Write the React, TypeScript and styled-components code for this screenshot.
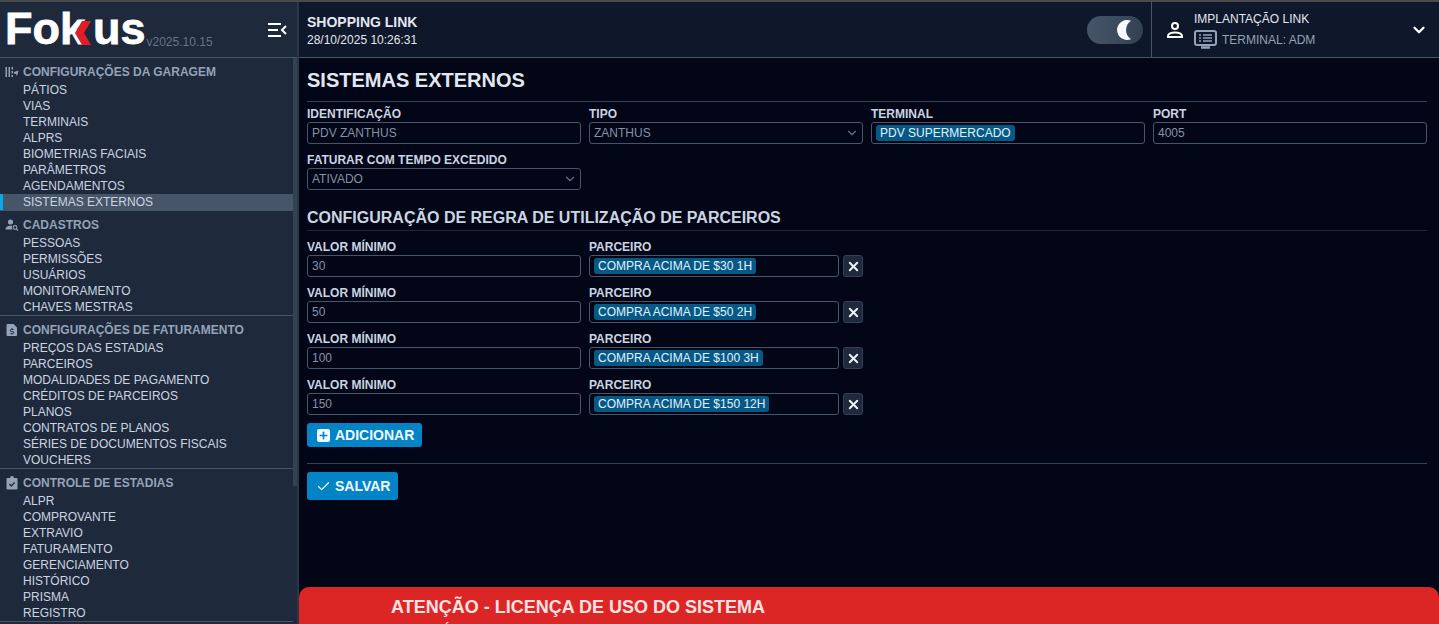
import React from 'react';
import styled, { createGlobalStyle } from 'styled-components';
import { Check, ChevronDown, Plus, X } from 'lucide-react';

const menu = [
  {
    title: 'CONFIGURAÇÕES DA GARAGEM',
    icon: 'garage',
    items: ['PÁTIOS', 'VIAS', 'TERMINAIS', 'ALPRS', 'BIOMETRIAS FACIAIS', 'PARÂMETROS', 'AGENDAMENTOS', 'SISTEMAS EXTERNOS'],
  },
  {
    title: 'CADASTROS',
    icon: 'people',
    items: ['PESSOAS', 'PERMISSÕES', 'USUÁRIOS', 'MONITORAMENTO', 'CHAVES MESTRAS'],
  },
  {
    title: 'CONFIGURAÇÕES DE FATURAMENTO',
    icon: 'invoice',
    items: ['PREÇOS DAS ESTADIAS', 'PARCEIROS', 'MODALIDADES DE PAGAMENTO', 'CRÉDITOS DE PARCEIROS', 'PLANOS', 'CONTRATOS DE PLANOS', 'SÉRIES DE DOCUMENTOS FISCAIS', 'VOUCHERS'],
  },
  {
    title: 'CONTROLE DE ESTADIAS',
    icon: 'clipboard',
    items: ['ALPR', 'COMPROVANTE', 'EXTRAVIO', 'FATURAMENTO', 'GERENCIAMENTO', 'HISTÓRICO', 'PRISMA', 'REGISTRO'],
  },
];

const rules = [
  { value: '30', partner: 'COMPRA ACIMA DE $30 1H' },
  { value: '50', partner: 'COMPRA ACIMA DE $50 2H' },
  { value: '100', partner: 'COMPRA ACIMA DE $100 3H' },
  { value: '150', partner: 'COMPRA ACIMA DE $150 12H' },
];

function MenuIcon({ name }: { name: string }) {
  if (name === 'garage') {
    return (
      <svg width="14" height="14" viewBox="0 0 14 14" fill="#94a3b8">
        <rect x="0.5" y="2" width="1.500" height="10" />
        <rect x="3.500" y="2" width="1.500" height="10" />
        <rect x="6.500" y="2" width="1.500" height="2.500" />
        <rect x="6.500" y="6" width="1.500" height="2.500" />
        <rect x="6.500" y="10" width="1.500" height="2" />
        <path d="M9 7l4.500-1.500-1.500 5.500-1-2-2-.5z" />
      </svg>
    );
  }
  if (name === 'people') {
    return (
      <svg width="14" height="14" viewBox="0 0 14 14" fill="#94a3b8">
        <circle cx="5.500" cy="4" r="2.600" />
        <path d="M0.500 11.500c0-2.600 2.400-3.800 5-3.800 .6 0 1.100 0 1.600.2-.4 1-.3 2.400.4 3.600z" />
        <circle cx="10" cy="9.500" r="1.900" fill="none" stroke="#94a3b8" strokeWidth="1.100" />
        <path d="M11.300 11l1.700 1.500" stroke="#94a3b8" strokeWidth="1.100" />
      </svg>
    );
  }
  if (name === 'invoice') {
    return (
      <svg width="14" height="14" viewBox="0 0 14 14" fill="#94a3b8">
        <path d="M2.500 1h6l3.500 3.500V12a1 1 0 0 1-1 1h-8.500a1 1 0 0 1-1-1V2a1 1 0 0 1 1-1z" />
        <path d="M7 5v1M7 10.500v1M8.500 6.500H6.300a.9.900 0 0 0 0 2h1.400a.9.900 0 0 1 0 2H5.500" stroke="#1e293b" strokeWidth="1" fill="none" />
      </svg>
    );
  }
  return (
    <svg width="14" height="14" viewBox="0 0 14 14" fill="#94a3b8">
      <path d="M2.500 2H5a2 2 0 0 1 4 0h2.500a1 1 0 0 1 1 1v9.500a1 1 0 0 1-1 1h-9a1 1 0 0 1-1-1V3a1 1 0 0 1 1-1z" />
      <path d="M4.300 8l2 2 3.400-3.500" stroke="#1e293b" strokeWidth="1.300" fill="none" />
    </svg>
  );
}

export default function App() {
  return (
    <>
      <GlobalStyle />
      <SPage>
        <SSidebarColumn>
          <SLogoBar>
            <SLogo>
              <SLogoText>Fo</SLogoText>
              <SLogoMark>
                <SLogoText>k</SLogoText>
                <SLogoChevron width="16" height="24" viewBox="0 0 16 24">
                  <path d="M7 0h9L9 12l7 12H7L0 12z" fill="#e11d28" />
                </SLogoChevron>
              </SLogoMark>
              <SLogoText>us</SLogoText>
            </SLogo>
            <SVersion>v2025.10.15</SVersion>
            <SCollapse width="20" height="16" viewBox="0 0 20 16" fill="none" stroke="#fff" strokeWidth="2">
              <path d="M1 2h13M1 8h10M1 14h13" />
              <path d="M19 4l-4 4 4 4" />
            </SCollapse>
          </SLogoBar>
          <SSidebar>
            <SSidebarList>
              {menu.map((section) => (
                <SSection key={section.title}>
                  <SSectionTitle>
                    <SSectionIcon><MenuIcon name={section.icon} /></SSectionIcon>
                    {section.title}
                  </SSectionTitle>
                  {section.items.map((item) => (
                    <SMenuItem key={item} $active={item === 'SISTEMAS EXTERNOS'}>{item}</SMenuItem>
                  ))}
                </SSection>
              ))}
            </SSidebarList>
            <SScrollTrack>
              <SScrollThumb />
            </SScrollTrack>
          </SSidebar>
        </SSidebarColumn>

        <SMainColumn>
          <SHeader>
            <SHeaderInfo>
              <SPlace>SHOPPING LINK</SPlace>
              <SDate>28/10/2025 10:26:31</SDate>
            </SHeaderInfo>
            <SToggle>
              <svg width="26" height="26" viewBox="0 0 26 26">
                <path d="M16 3.800A10 10 0 1 0 16 22.200A11 11 0 0 1 16 3.800z" fill="#f8fafc" />
              </svg>
            </SToggle>
            <SUserBox>
              <SUserIcon width="20" height="20" viewBox="0 0 20 20" fill="none" stroke="#fff" strokeWidth="2">
                <circle cx="10" cy="6" r="3" />
                <path d="M3 17v-1c0-2 3-3.500 7-3.500s7 1.500 7 3.500v1z" />
              </SUserIcon>
              <SUserText>
                <SUserName>IMPLANTAÇÃO LINK</SUserName>
                <STerminal>
                  <svg width="23" height="19" viewBox="0 0 23 19" fill="none" stroke="#94a3b8" strokeWidth="2">
                    <rect x="1" y="1" width="21" height="14" rx="2" />
                    <path d="M5 5h2M9 5h9M5 8h2M9 8h9M5 11h2M9 11h9" strokeWidth="1.400" />
                    <path d="M7 17.500h9" strokeWidth="2.500" />
                  </svg>
                  TERMINAL: ADM
                </STerminal>
              </SUserText>
              <SUserChevron><ChevronDown size={18} strokeWidth={3} color="#fff" /></SUserChevron>
            </SUserBox>
          </SHeader>

          <SContent>
            <STitle>SISTEMAS EXTERNOS</STitle>
            <SFormGrid>
              <SField>
                <SLabel>IDENTIFICAÇÃO</SLabel>
                <SInput>PDV ZANTHUS</SInput>
              </SField>
              <SField>
                <SLabel>TIPO</SLabel>
                <SInput>ZANTHUS<SSelectChevron><ChevronDown size={14} /></SSelectChevron></SInput>
              </SField>
              <SField>
                <SLabel>TERMINAL</SLabel>
                <SInput><STag>PDV SUPERMERCADO</STag></SInput>
              </SField>
              <SField>
                <SLabel>PORT</SLabel>
                <SInput>4005</SInput>
              </SField>
              <SField>
                <SLabel>FATURAR COM TEMPO EXCEDIDO</SLabel>
                <SInput>ATIVADO<SSelectChevron><ChevronDown size={14} /></SSelectChevron></SInput>
              </SField>
            </SFormGrid>

            <SSubtitle>CONFIGURAÇÃO DE REGRA DE UTILIZAÇÃO DE PARCEIROS</SSubtitle>
            {rules.map((rule) => (
              <SRuleRow key={rule.value}>
                <SField>
                  <SLabel>VALOR MÍNIMO</SLabel>
                  <SInput>{rule.value}</SInput>
                </SField>
                <SField>
                  <SLabel>PARCEIRO</SLabel>
                  <SPartnerLine>
                    <SInput><STag>{rule.partner}</STag></SInput>
                    <SRemove><X size={15} strokeWidth={3} /></SRemove>
                  </SPartnerLine>
                </SField>
              </SRuleRow>
            ))}
            <SAddButton>
              <SPlusBox><Plus size={11} strokeWidth={3.500} color="#0284c7" /></SPlusBox>
              ADICIONAR
            </SAddButton>
            <SDivider />
            <SSaveButton>
              <Check size={15} strokeWidth={2} />
              SALVAR
            </SSaveButton>
          </SContent>

          <SBanner>
            <SBannerTitle>ATENÇÃO - LICENÇA DE USO DO SISTEMA</SBannerTitle>
            <SBannerText>NO PERÍODO</SBannerText>
          </SBanner>
        </SMainColumn>
      </SPage>
    </>
  );
}

const GlobalStyle = createGlobalStyle`
  html, body {
    margin: 0;
    height: 100%;
    overflow: hidden;
    background: #020617;
    font-family: "Liberation Sans", Arial, sans-serif;
  }
  #root {
    height: 100%;
  }
  * {
    box-sizing: border-box;
  }
`;

const SPage = styled.div`
  display: flex;
  height: 100vh;
  border-top: 2px solid #4a4a4c;
`;

const SSidebarColumn = styled.aside`
  width: 299px;
  flex-shrink: 0;
  display: flex;
  flex-direction: column;
  background: #1e293b;
  border-right: 2px solid #2b3748;
`;

const SLogoBar = styled.div`
  height: 56px;
  flex-shrink: 0;
  display: flex;
  align-items: flex-end;
  padding: 0 10px 9px 5px;
  border-bottom: 1px solid #475569;
`;

const SLogo = styled.div`
  display: flex;
  align-items: baseline;
  height: 38px;
  color: #fff;
`;

const SLogoText = styled.span`
  font-size: 45px;
  line-height: 38px;
  font-weight: 700;
  -webkit-text-stroke: 0.8px #fff;
`;

const SLogoMark = styled.span`
  position: relative;
  display: inline-block;
  width: 33px;
`;

const SLogoChevron = styled.svg`
  position: absolute;
  left: 15px;
  top: 11px;
`;

const SVersion = styled.span`
  margin: 0 0 -1px 1px;
  font-size: 12px;
  color: #64748b;
`;

const SCollapse = styled.svg`
  margin-left: auto;
  margin-bottom: 10px;
`;

const SSidebar = styled.nav`
  flex: 1;
  min-height: 0;
  display: flex;
`;

const SSidebarList = styled.div`
  flex: 1;
  min-width: 0;
  overflow: hidden;
`;

const SScrollTrack = styled.div`
  width: 4px;
  flex-shrink: 0;
`;

const SScrollThumb = styled.div`
  height: 428px;
  background: #334155;
`;

const SSection = styled.section`
  border-bottom: 1px solid #475569;
`;

const SSectionTitle = styled.h3`
  display: flex;
  align-items: center;
  height: 24px;
  margin: 0;
  padding: 4px 0 0 5px;
  font-size: 12px;
  font-weight: 700;
  color: #94a3b8;
`;

const SSectionIcon = styled.span`
  display: flex;
  width: 18px;
`;

const SMenuItem = styled.div<{ $active?: boolean }>`
  height: 16px;
  line-height: 16px;
  padding-left: 23px;
  font-size: 12px;
  color: #cbd5e1;
  background: ${(p) => (p.$active ? '#475569' : 'transparent')};
  box-shadow: ${(p) => (p.$active ? 'inset 3px 0 0 #0ea5e9' : 'none')};
`;

const SMainColumn = styled.div`
  position: relative;
  flex: 1;
  min-width: 0;
  display: flex;
  flex-direction: column;
  overflow: hidden;
`;

const SHeader = styled.header`
  height: 56px;
  flex-shrink: 0;
  display: flex;
  align-items: stretch;
  background: #0f172a;
  border-bottom: 1px solid #475569;
`;

const SHeaderInfo = styled.div`
  flex: 1;
  padding: 12px 0 0 8px;
`;

const SPlace = styled.div`
  font-size: 14px;
  line-height: 17px;
  font-weight: 700;
  color: #e2e8f0;
`;

const SDate = styled.div`
  margin-top: 2px;
  font-size: 12px;
  line-height: 15px;
  color: #e2e8f0;
`;

const SToggle = styled.div`
  width: 56px;
  height: 28px;
  margin: 14px 8px 0 0;
  padding-left: 28px;
  display: flex;
  align-items: center;
  border-radius: 14px;
  background: linear-gradient(90deg, #475569, #334155);
`;

const SUserBox = styled.div`
  width: 288px;
  display: flex;
  align-items: flex-start;
  padding: 0 11px 0 13px;
  border-left: 1px solid #475569;
`;

const SUserIcon = styled.svg`
  margin: 18px 9px 0 0;
`;

const SUserText = styled.div`
  flex: 1;
  padding-top: 10px;
`;

const SUserName = styled.div`
  font-size: 12px;
  line-height: 15px;
  color: #e2e8f0;
`;

const STerminal = styled.div`
  display: flex;
  align-items: center;
  gap: 5px;
  margin-top: 3px;
  font-size: 12px;
  color: #94a3b8;
`;

const SUserChevron = styled.span`
  margin-top: 19px;
`;

const SContent = styled.main`
  flex: 1;
  padding: 0 12px 0 8px;
  background: #020617;
`;

const STitle = styled.h1`
  margin: 0;
  height: 44px;
  padding-top: 11px;
  font-size: 20px;
  line-height: 23px;
  font-weight: 700;
  color: #e2e8f0;
  border-bottom: 1px solid #334155;
`;

const SFormGrid = styled.div`
  display: grid;
  grid-template-columns: repeat(4, 1fr);
  gap: 8px;
  margin-top: 4px;
`;

const SField = styled.div`
  min-width: 0;
`;

const SLabel = styled.label`
  display: block;
  height: 16px;
  line-height: 16px;
  font-size: 12px;
  font-weight: 700;
  color: #cbd5e1;
`;

const SInput = styled.div`
  position: relative;
  flex: 1;
  display: flex;
  align-items: center;
  height: 22px;
  padding: 0 4px;
  font-size: 12px;
  color: #8793a5;
  background: #020617;
  border: 1px solid #475569;
  border-radius: 3px;
`;

const SSelectChevron = styled.span`
  position: absolute;
  right: 3px;
  top: 3px;
  display: flex;
  color: #64748b;
`;

const STag = styled.span`
  height: 16px;
  line-height: 16px;
  padding: 0 4px;
  font-size: 12px;
  color: #e0f2fe;
  background: #075985;
  border-radius: 3px;
`;

const SSubtitle = styled.h2`
  margin: 18px 0 0;
  height: 23px;
  padding-top: 1px;
  font-size: 16px;
  line-height: 18px;
  font-weight: 700;
  color: #cbd5e1;
  border-bottom: 1px solid #1e293b;
`;

const SRuleRow = styled.div`
  display: grid;
  grid-template-columns: 274px 274px;
  gap: 8px;
  margin-top: 8px;
`;

const SPartnerLine = styled.div`
  display: flex;
  gap: 4px;
`;

const SRemove = styled.button`
  width: 20px;
  height: 22px;
  padding: 0;
  display: flex;
  align-items: center;
  justify-content: center;
  color: #f1f5f9;
  background: #1e293b;
  border: 1px solid #334155;
  border-radius: 3px;
`;

const SButton = styled.button`
  display: flex;
  align-items: center;
  padding: 0;
  border: 0;
  border-radius: 3px;
  font-family: inherit;
  font-size: 14px;
  font-weight: 700;
  color: #f0f9ff;
  background: #0284c7;
`;

const SAddButton = styled(SButton)`
  width: 115px;
  height: 24px;
  margin-top: 8px;
  padding-left: 10px;
  gap: 5px;
`;

const SPlusBox = styled.span`
  width: 13px;
  height: 13px;
  display: flex;
  align-items: center;
  justify-content: center;
  background: #f0f9ff;
  border-radius: 2px;
`;

const SDivider = styled.hr`
  height: 1px;
  margin: 16px 0 8px;
  border: 0;
  background: #334155;
`;

const SSaveButton = styled(SButton)`
  width: 91px;
  height: 28px;
  padding-left: 9px;
  gap: 4px;
`;

const SBanner = styled.div`
  position: absolute;
  left: 0;
  right: 0;
  top: 585px;
  height: 120px;
  padding: 10px 0 0 92px;
  background: #dc2626;
  border-radius: 10px 10px 0 0;
`;

const SBannerTitle = styled.div`
  font-size: 18px;
  line-height: 20px;
  font-weight: 700;
  color: #fee2e2;
`;

const SBannerText = styled.div`
  margin-top: 5px;
  font-size: 14px;
  line-height: 16px;
  color: #fee2e2;
`;
